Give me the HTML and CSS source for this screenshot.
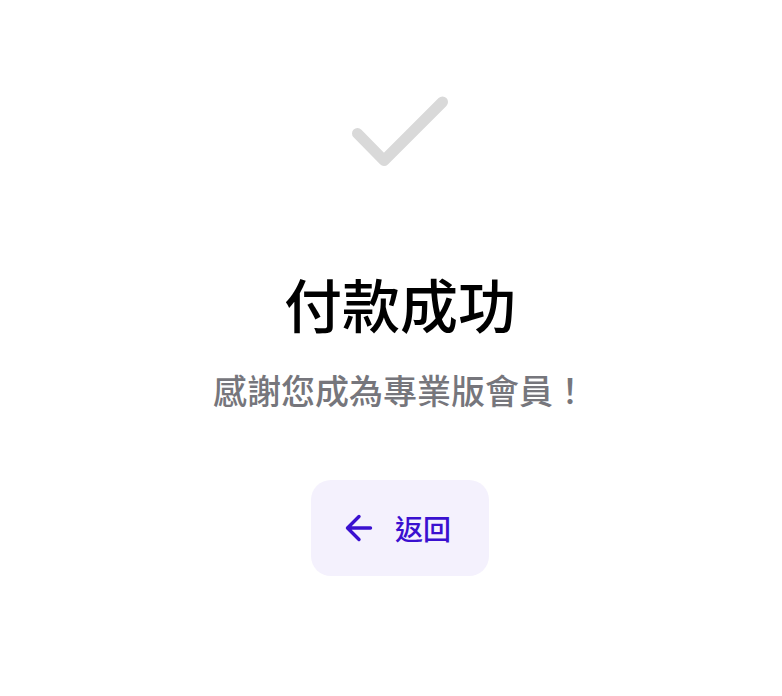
FILE: index.html
```
<!DOCTYPE html>
<html lang="zh-Hant">
<head>
    <meta charset="utf-8" />
    <meta name="viewport" content="width=device-width, initial-scale=1" />
    <title>付款成功</title>
    <link rel="stylesheet" href="styles.css">
</head>
<body>
    <main class="result">
        <svg class="check" viewBox="0 0 96 72" fill="none" aria-hidden="true">
            <path d="M5.5 37.5L32 64.5L90.5 6" stroke="#d9d9d9" stroke-width="11" stroke-linecap="round" stroke-linejoin="round" />
        </svg>
        <h1 class="title">付款成功</h1>
        <p class="message">感謝您成為專業版會員！</p>
        <button type="button" class="back">
            <svg class="arrow" viewBox="0 0 28 28" fill="none" aria-hidden="true">
                <path d="M25.5 14H2.5M14 2.5L2.5 14L14 25.5" stroke="#3a10d0" stroke-width="3.4" stroke-linecap="round" stroke-linejoin="round" />
            </svg>
            <span>返回</span>
        </button>
    </main>
</body>
</html>
```

FILE: styles.css
```
*{
    box-sizing:border-box;
    padding:0;
    margin:0;
}
body{
    background:#fff;
    font-family:"Noto Sans CJK TC", sans-serif;
    font-weight:500;
}
.result{
    display:flex;
    flex-direction:column;
    align-items:center;
    padding:96px 0 96px 18px;
}
.check{
    width:96px;
    height:72px;
}
.title{
    margin-top:93px;
    color:#000;
    font-size:58px;
    font-weight:500;
    line-height:84px;
}
.message{
    margin-top:21px;
    color:#76767c;
    font-size:34px;
    line-height:48px;
}
.back{
    display:flex;
    align-items:center;
    gap:22px;
    margin-top:66px;
    padding:24px 38px 24px 34px;
    border:0;
    border-radius:20px;
    background:#f4f1fd;
    color:#3a10d0;
    font-family:inherit;
    font-size:28px;
    font-weight:500;
    line-height:48px;
    cursor:pointer;
}
.back:hover{
    background:#ebe5fb;
}
.arrow{
    width:28px;
    height:28px;
}
```
